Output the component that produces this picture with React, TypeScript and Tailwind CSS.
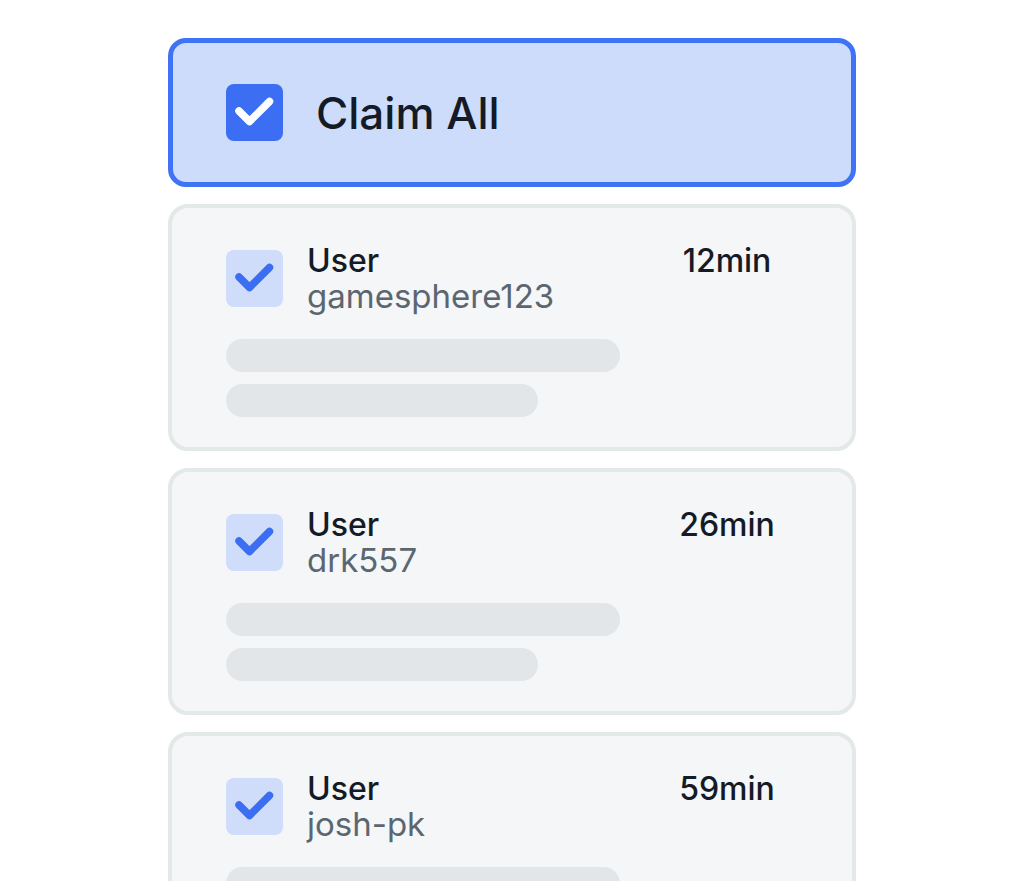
const users = [
  { name: "gamesphere123", time: "12min" },
  { name: "drk557", time: "26min" },
  { name: "josh-pk", time: "59min" },
]

function Check({ color }: { color: string }) {
  return (
    <svg viewBox="0 0 57 57" className="w-[57px] h-[57px]">
      <path
        d="M13 27 L23.5 37.5 L43.5 17.5"
        fill="none"
        stroke={color}
        strokeWidth="7.5"
        strokeLinecap="round"
        strokeLinejoin="round"
      />
    </svg>
  )
}

function UserCard({ name, time }: { name: string; time: string }) {
  return (
    <div className="rounded-[20px] border-4 border-[#e3e8e9] bg-[#f4f6f7] pl-[54px] pt-[35px] pb-[30px]">
      {/* header row */}
      <div className="flex">
        <div className="flex items-center gap-[24px] flex-1">
          <div className="w-[57px] h-[57px] rounded-[8px] bg-[#cfddfb]">
            <Check color="#3b6ef3" />
          </div>
          <div className="flex flex-col">
            <span className="text-[32px] leading-[35px] font-medium text-[#151b26]">User</span>
            <span className="text-[33px] leading-[36px] text-[#5b6670]">{name}</span>
          </div>
        </div>
        <div className="w-[130px] mr-[60px] text-center text-[32px] leading-[35px] font-medium text-[#151b26]">
          {time}
        </div>
      </div>

      {/* placeholder lines */}
      <div className="flex flex-col gap-3 mt-[25px]">
        <div className="w-[394px] h-[33px] rounded-full bg-[#e2e6e9]" />
        <div className="w-[312px] h-[33px] rounded-full bg-[#e2e6e9]" />
      </div>
    </div>
  )
}

export default function App() {
  return (
    <div className="min-h-screen bg-white font-['Inter',sans-serif]">
      <div className="w-[688px] mx-auto pt-[38px] flex flex-col gap-[17px]">
        {/* Claim all */}
        <div className="h-[149px] rounded-[18px] border-[5px] border-[#3f73f5] bg-[#cedcfb] pl-[53px] flex items-center gap-[33px]">
          <div className="w-[57px] h-[57px] rounded-[8px] bg-[#3b6ef3]">
            <Check color="#ffffff" />
          </div>
          <span className="text-[44px] font-medium text-[#151b26] leading-none">Claim All</span>
        </div>

        {users.map((u) => (
          <UserCard key={u.name} name={u.name} time={u.time} />
        ))}
      </div>
    </div>
  )
}
